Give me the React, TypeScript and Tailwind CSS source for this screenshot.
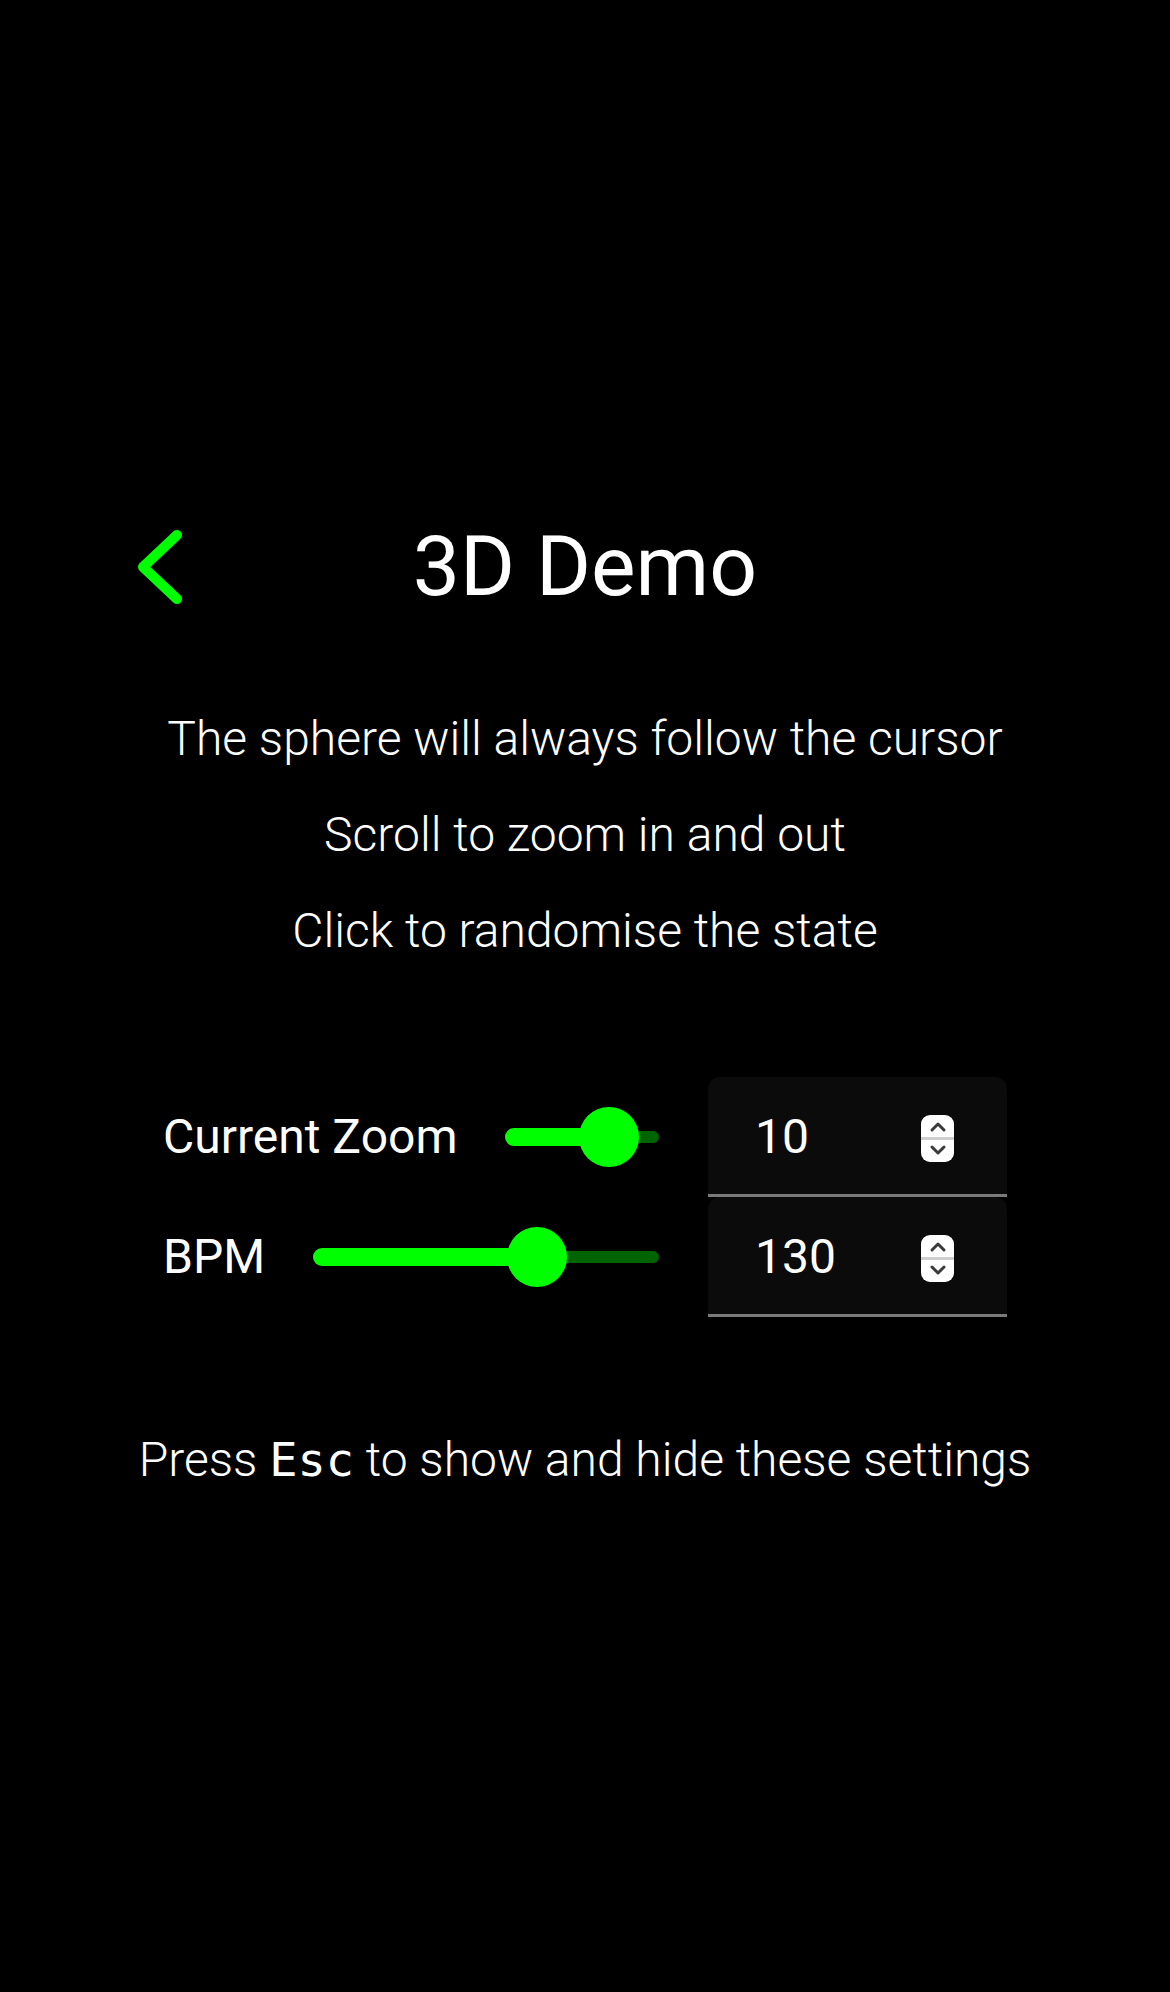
import React from "react";

const GREEN = "#00ff00";

const BackIcon: React.FC<{ className?: string }> = ({ className }) => (
  <svg className={className} width="48" height="80" viewBox="0 0 48 80" fill="none">
    <path
      d="M40 8 L6 40 L40 72"
      stroke={GREEN}
      strokeWidth="10"
      strokeLinecap="round"
      strokeLinejoin="round"
    />
  </svg>
);

// native-looking number spinner
const Spinner: React.FC = () => (
  <div className="mt-[5px] w-[33px] h-[47px] rounded-[9px] bg-white flex flex-col items-center justify-between py-[6px]">
    <svg width="18" height="12" viewBox="0 0 18 12" fill="none">
      <path d="M3 9 L9 3 L15 9" stroke="#3a3a3a" strokeWidth="3" strokeLinecap="round" strokeLinejoin="round" />
    </svg>
    <div className="w-full h-[3px] bg-[#cfcfcf]" />
    <svg width="18" height="12" viewBox="0 0 18 12" fill="none">
      <path d="M3 3 L9 9 L15 3" stroke="#3a3a3a" strokeWidth="3" strokeLinecap="round" strokeLinejoin="round" />
    </svg>
  </div>
);

const Slider: React.FC<{ thumbAt: number; className?: string }> = ({ thumbAt, className }) => {
  // thumbAt = px from track left to thumb centre
  return (
    <div className={`relative h-[60px] flex items-center ${className ?? ""}`}>
      <div className="w-full h-[12px] rounded-full bg-[#006400]" />
      <div
        className="absolute left-0 h-[18px] rounded-full bg-[#00ff00]"
        style={{ width: thumbAt }}
      />
      <div
        className="absolute top-0 w-[60px] h-[60px] rounded-full bg-[#00ff00]"
        style={{ left: thumbAt - 30 }}
      />
    </div>
  );
};

const SettingRow: React.FC<{
  label: string;
  value: number;
  thumbAt: number;
}> = ({ label, value, thumbAt }) => (
  <div className="flex items-center gap-[49px] h-[120px]">
    <div className="flex flex-1 items-center gap-[48px]">
      <span className="text-[48px] leading-[96px] whitespace-nowrap">{label}</span>
      <Slider thumbAt={thumbAt} className="flex-1" />
    </div>
    <div className="w-[299px] h-[120px] bg-[#0b0b0b] rounded-t-[12px] border-b-[3px] border-[#7a7a7a] flex items-center pl-[47px] pr-[53px]">
      <span className="flex-1 text-[48px] leading-[96px] pt-[2px]">{value}</span>
      <Spinner />
    </div>
  </div>
);

export default function App() {
  return (
    <div
      className="min-h-[1992px] bg-black text-white flex flex-col items-center pt-[507px]"
      style={{ fontFamily: "Roboto, 'Liberation Sans', sans-serif" }}
    >
      <div className="w-full grid grid-cols-[1fr_auto_1fr] items-center h-[120px] px-[137px]">
        <div className="flex items-center">
          <BackIcon />
        </div>
        <h1 className="text-[84px] leading-[84px] font-normal">3D Demo</h1>
        <div />
      </div>

      <div className="mt-[64px] flex flex-col items-center font-light text-[48px] leading-[96px]">
        <p>The sphere will always follow the cursor</p>
        <p>Scroll to zoom in and out</p>
        <p>Click to randomise the state</p>
      </div>

      <div className="mt-[98px] w-[844px] flex flex-col">
        <SettingRow label="Current Zoom" value={10} thumbAt={104} />
        <SettingRow label="BPM" value={130} thumbAt={224} />
      </div>

      <p className="mt-[95px] font-light text-[48px] leading-[96px]">
        Press{" "}
        <kbd
          className="text-[47px] font-normal"
          style={{ fontFamily: "'DejaVu Sans Mono', monospace" }}
        >
          Esc
        </kbd>{" "}
        to show and hide these settings
      </p>
    </div>
  );
}
